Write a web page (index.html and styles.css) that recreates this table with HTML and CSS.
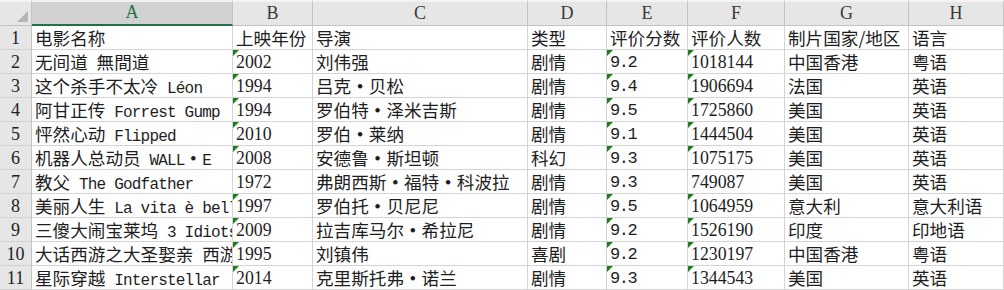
FILE: index.html
```html
<!DOCTYPE html>
<html lang="zh-CN">
<head>
<meta charset="utf-8">
<title>Sheet</title>
<link rel="stylesheet" href="styles.css">
</head>
<body>
<div class="sheet">
  <div class="corner"><span class="corner-tri"></span></div>
  <div class="ch sel">A</div>
  <div class="ch">B</div>
  <div class="ch">C</div>
  <div class="ch">D</div>
  <div class="ch">E</div>
  <div class="ch">F</div>
  <div class="ch">G</div>
  <div class="ch">H</div>

  <div class="rh">1</div>
  <div class="c">电影名称</div>
  <div class="c">上映年份</div>
  <div class="c">导演</div>
  <div class="c">类型</div>
  <div class="c">评价分数</div>
  <div class="c">评价人数</div>
  <div class="c">制片国家/地区</div>
  <div class="c">语言</div>

  <div class="rh">2</div>
  <div class="c">无间道<span class="en"> </span>無間道</div>
  <div class="c num flag">2002</div>
  <div class="c">刘伟强</div>
  <div class="c">剧情</div>
  <div class="c score flag">9.2</div>
  <div class="c num flag">1018144</div>
  <div class="c">中国香港</div>
  <div class="c">粤语</div>

  <div class="rh">3</div>
  <div class="c">这个杀手不太冷<span class="en"> Léon</span></div>
  <div class="c num flag">1994</div>
  <div class="c">吕克<span class="dot">·</span>贝松</div>
  <div class="c">剧情</div>
  <div class="c score flag">9.4</div>
  <div class="c num flag">1906694</div>
  <div class="c">法国</div>
  <div class="c">英语</div>

  <div class="rh">4</div>
  <div class="c">阿甘正传<span class="en"> Forrest Gump</span></div>
  <div class="c num flag">1994</div>
  <div class="c">罗伯特<span class="dot">·</span>泽米吉斯</div>
  <div class="c">剧情</div>
  <div class="c score flag">9.5</div>
  <div class="c num flag">1725860</div>
  <div class="c">美国</div>
  <div class="c">英语</div>

  <div class="rh">5</div>
  <div class="c">怦然心动<span class="en"> Flipped</span></div>
  <div class="c num flag">2010</div>
  <div class="c">罗伯<span class="dot">·</span>莱纳</div>
  <div class="c">剧情</div>
  <div class="c score flag">9.1</div>
  <div class="c num flag">1444504</div>
  <div class="c">美国</div>
  <div class="c">英语</div>

  <div class="rh">6</div>
  <div class="c">机器人总动员<span class="en"> WALL</span><span class="dot">·</span><span class="en">E</span></div>
  <div class="c num flag">2008</div>
  <div class="c">安德鲁<span class="dot">·</span>斯坦顿</div>
  <div class="c">科幻</div>
  <div class="c score flag">9.3</div>
  <div class="c num flag">1075175</div>
  <div class="c">美国</div>
  <div class="c">英语</div>

  <div class="rh">7</div>
  <div class="c">教父<span class="en"> The Godfather</span></div>
  <div class="c num">1972</div>
  <div class="c">弗朗西斯<span class="dot">·</span>福特<span class="dot">·</span>科波拉</div>
  <div class="c">剧情</div>
  <div class="c score">9.3</div>
  <div class="c num">749087</div>
  <div class="c">美国</div>
  <div class="c">英语</div>

  <div class="rh">8</div>
  <div class="c">美丽人生<span class="en"> La vita è bella</span></div>
  <div class="c num flag">1997</div>
  <div class="c">罗伯托<span class="dot">·</span>贝尼尼</div>
  <div class="c">剧情</div>
  <div class="c score flag">9.5</div>
  <div class="c num flag">1064959</div>
  <div class="c">意大利</div>
  <div class="c">意大利语</div>

  <div class="rh">9</div>
  <div class="c">三傻大闹宝莱坞<span class="en"> 3 Idiots</span></div>
  <div class="c num flag">2009</div>
  <div class="c">拉吉库马尔<span class="dot">·</span>希拉尼</div>
  <div class="c">剧情</div>
  <div class="c score flag">9.2</div>
  <div class="c num flag">1526190</div>
  <div class="c">印度</div>
  <div class="c">印地语</div>

  <div class="rh">10</div>
  <div class="c">大话西游之大圣娶亲<span class="en"> </span>西游记大结局之仙履奇缘</div>
  <div class="c num flag">1995</div>
  <div class="c">刘镇伟</div>
  <div class="c">喜剧</div>
  <div class="c score flag">9.2</div>
  <div class="c num flag">1230197</div>
  <div class="c">中国香港</div>
  <div class="c">粤语</div>

  <div class="rh">11</div>
  <div class="c">星际穿越<span class="en"> Interstellar</span></div>
  <div class="c num flag">2014</div>
  <div class="c">克里斯托弗<span class="dot">·</span>诺兰</div>
  <div class="c">剧情</div>
  <div class="c score flag">9.3</div>
  <div class="c num flag">1344543</div>
  <div class="c">美国</div>
  <div class="c">英语</div>
</div>
</body>
</html>
```

FILE: styles.css
```css
html, body {
  margin: 0;
  padding: 0;
  background: #ffffff;
}

.sheet {
  display: grid;
  grid-template-columns: 32px 201px 80px 215px 79px 81px 97px 124px 1fr;
  grid-template-rows: 26px repeat(11, 24px);
  width: 1004px;
  font-family: "Noto Sans CJK SC", sans-serif;
  font-size: 17.6px;
  color: #1e1e1e;
}

.sheet > div {
  box-sizing: border-box;
  border-right: 1px solid #d4d4d4;
  border-bottom: 1px solid #d4d4d4;
  overflow: hidden;
  white-space: nowrap;
}

.corner {
  position: relative;
  background: #e6e6e6;
  border-top: 2px solid #f3f3f3;
  border-right-color: #c3c3c3 !important;
  border-bottom-color: #c3c3c3 !important;
}

.corner-tri {
  position: absolute;
  right: 3px;
  bottom: 3px;
  width: 0;
  height: 0;
  border-left: 11px solid transparent;
  border-bottom: 11px solid #b5b5b5;
}

.ch {
  background: #e6e6e6;
  border-top: 2px solid #f3f3f3;
  border-right-color: #c3c3c3 !important;
  border-bottom-color: #c3c3c3 !important;
  font-family: "Liberation Serif", serif;
  font-size: 18px;
  color: #3a3a3a;
  text-align: center;
  line-height: 22px;
}

.ch.sel {
  background: #d2d2d2;
  color: #217346;
  border-bottom: 2px solid #217346 !important;
  line-height: 21px;
}

.rh {
  background: #e6e6e6;
  border-right-color: #c3c3c3 !important;
  border-bottom-color: #d0d0d0 !important;
  font-family: "Liberation Serif", serif;
  font-size: 18px;
  color: #222;
  text-align: center;
  line-height: 24px;
}

.c {
  position: relative;
  padding-left: 3px;
  line-height: 23px;
}

.num {
  font-family: "Liberation Serif", serif;
  font-size: 17.8px;
  padding-top: 2px;
  line-height: 21px;
}

.score {
  font-family: "Liberation Mono", monospace;
  font-size: 17px;
  letter-spacing: -1.4px;
  padding-top: 2px;
  line-height: 21px;
}

.en {
  font-family: "Liberation Mono", monospace;
  font-size: 16px;
  letter-spacing: -0.8px;
}

.dot {
  display: inline-block;
  width: 17.6px;
  text-align: center;
  font-weight: 700;
}

.flag::before {
  content: "";
  position: absolute;
  left: 0;
  top: 0;
  width: 0;
  height: 0;
  border-top: 6px solid #1f7d1f;
  border-right: 6px solid transparent;
}
```
